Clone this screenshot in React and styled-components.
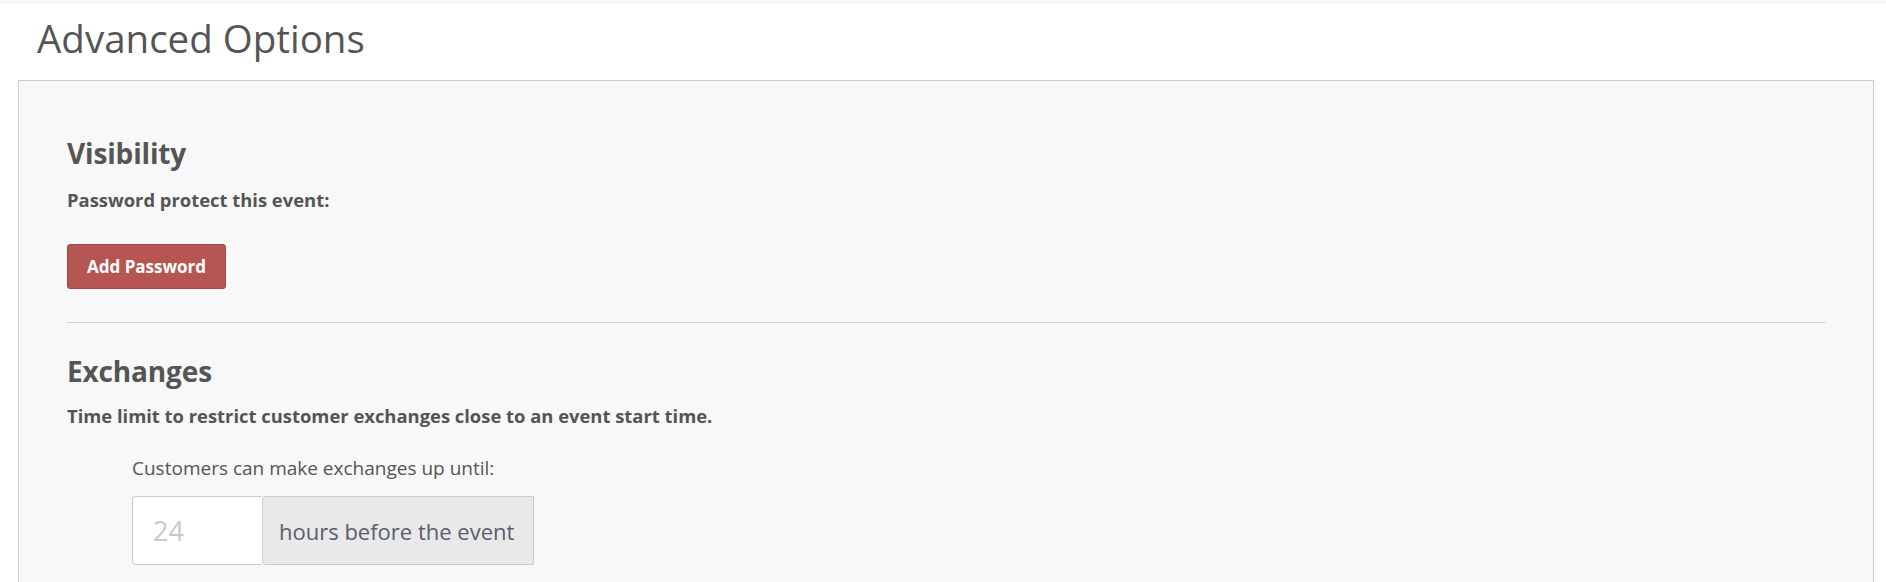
import React from "react";
import styled, { createGlobalStyle } from "styled-components";

const Global = createGlobalStyle`
  html, body { margin: 0; padding: 0; background: #fff; }
  body { font-family: "Open Sans", "Liberation Sans", sans-serif; color: #555; }
`;

const Page = styled.div`
  width: 1886px;
  height: 582px;
  overflow: hidden;
  display: flex;
  flex-direction: column;
  & > * { flex-shrink: 0; }
`;

const TopStrip = styled.div`
  height: 4px;
  background: #f8f8f8;
`;

const Title = styled.h1`
  margin: 0;
  padding: 11px 0 0 37px;
  height: 65px;
  box-sizing: border-box;
  font-size: 38.5px;
  line-height: 46px;
  font-weight: 400;
  color: #555;
`;

const Panel = styled.section`
  margin: 11px 12px 0 18px;
  border: 1px solid #ccc;
  background: #f8f8f8;
  padding: 55px 47px 40px 48px;
`;

const Heading = styled.h2`
  margin: 0;
  font-size: 28px;
  line-height: 34px;
  font-weight: 700;
  color: #555;
  letter-spacing: -0.15px;
`;

const Label = styled.p`
  margin: ${(p) => p.$mt || 0}px 0 0 0;
  font-size: 18.4px;
  line-height: 24px;
  font-weight: 700;
  color: #555;
`;

const DangerButton = styled.button`
  margin-top: 32px;
  height: 45px;
  padding: 0 19px;
  border: 1px solid #a94442;
  border-radius: 3px;
  background: #b55653;
  color: #fff;
  font-family: "Open Sans", "Liberation Sans", sans-serif;
  font-size: 17px;
  font-weight: 700;
  cursor: pointer;
`;

const Divider = styled.hr`
  margin: 33px 0 31px 0;
  border: 0;
  border-top: 1px solid #d3d3d3;
`;

const Indented = styled.div`
  padding-left: 65px;
  margin-top: 28px;
`;

const FieldLabel = styled.label`
  display: block;
  font-size: 19px;
  line-height: 24px;
  color: #555;
`;

const InputGroup = styled.div`
  display: flex;
  margin-top: 16px;
  height: 69px;
  width: 402px;
`;

const NumberInput = styled.input`
  width: 130px;
  box-sizing: border-box;
  border: 1px solid #ccc;
  border-right: 0;
  border-radius: 4px 0 0 4px;
  background: #fff;
  padding: 0 20px;
  font-family: "Open Sans", "Liberation Sans", sans-serif;
  font-size: 27px;
  color: #555;
  outline: none;
  &::placeholder { color: #c8c8c8; }
`;

const Addon = styled.span`
  flex: 1;
  display: flex;
  align-items: center;
  padding: 0 16px;
  border: 1px solid #ccc;
  border-radius: 4px 0 0 4px;
  background: #e9e9e9;
  color: #56606c;
  font-size: 22px;
`;

export default function App() {
  return (
    <Page>
      <Global />
      <TopStrip />
      <Title>Advanced Options</Title>
      <Panel>
        <Heading>Visibility</Heading>
        <Label $mt={18}>Password protect this event:</Label>
        <DangerButton>Add Password</DangerButton>
        <Divider />
        <Heading>Exchanges</Heading>
        <Label $mt={16}>Time limit to restrict customer exchanges close to an event start time.</Label>
        <Indented>
          <FieldLabel>Customers can make exchanges up until:</FieldLabel>
          <InputGroup>
            <NumberInput type="text" placeholder="24" />
            <Addon>hours before the event</Addon>
          </InputGroup>
        </Indented>
      </Panel>
    </Page>
  );
}
